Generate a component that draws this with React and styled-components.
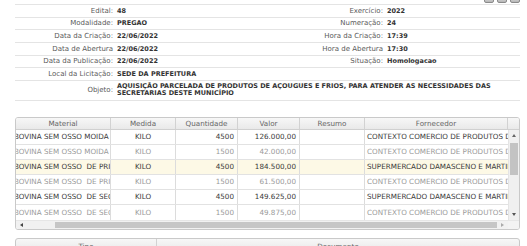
import React from 'react'
import styled, { createGlobalStyle, css } from 'styled-components'

const GlobalStyle = createGlobalStyle`
  html, body {
    margin: 0;
    padding: 0;
    background: #fff;
  }
  body {
    font-family: 'DejaVu Sans', Verdana, sans-serif;
    text-rendering: geometricPrecision;
    overflow: hidden;
  }
  * {
    box-sizing: border-box;
  }
`

const fields = [
  ['Edital:', '48', 'Exercício:', '2022'],
  ['Modalidade:', 'PREGAO', 'Numeração:', '24'],
  ['Data da Criação:', '22/06/2022', 'Hora da Criação:', '17:39'],
  ['Data de Abertura', '22/06/2022', 'Hora de Abertura', '17:30'],
  ['Data da Publicação:', '22/06/2022', 'Situação:', 'Homologacao'],
  ['Local da Licitação:', 'SEDE DA PREFEITURA', '', ''],
]

const columns = [
  { title: 'Material', width: 95 },
  { title: 'Medida', width: 65 },
  { title: 'Quantidade', width: 62 },
  { title: 'Valor', width: 62 },
  { title: 'Resumo', width: 65 },
  { title: 'Fornecedor', width: 143 },
]

const CONTEXTO = 'CONTEXTO COMERCIO DE PRODUTOS DE LIMPEZA'
const SUPER = 'SUPERMERCADO DAMASCENO E MARTINS LTDA'

const items = [
  { mat: 'BOVINA SEM OSSO MOIDA', qtd: '4500', valor: '126.000,00', forn: CONTEXTO, dim: false },
  { mat: 'BOVINA SEM OSSO MOIDA', qtd: '1500', valor: '42.000,00', forn: CONTEXTO, dim: true },
  { mat: 'BOVINA SEM OSSO  DE PRIMEIRA', qtd: '4500', valor: '184.500,00', forn: SUPER, dim: false, hl: true },
  { mat: 'BOVINA SEM OSSO  DE PRIMEIRA', qtd: '1500', valor: '61.500,00', forn: CONTEXTO, dim: true },
  { mat: 'BOVINA SEM OSSO  DE SEGUNDA', qtd: '4500', valor: '149.625,00', forn: SUPER, dim: false },
  { mat: 'BOVINA SEM OSSO  DE SEGUNDA', qtd: '1500', valor: '49.875,00', forn: CONTEXTO, dim: true },
]

function App() {
  return (
    <>
      <GlobalStyle />
      <Page>
        <Toolbar>
          <ToolIcon />
          <ToolIcon />
          <ToolIcon />
        </Toolbar>

        <Form>
          {fields.map((f) => (
            <FieldRow key={f[0]}>
              <Label>{f[0]}</Label>
              <Value>{f[1]}</Value>
              <Label>{f[2]}</Label>
              <Value>{f[3]}</Value>
            </FieldRow>
          ))}
          <FieldRow tall>
            <Label>Objeto:</Label>
            <Value wide>
              AQUISIÇÃO PARCELADA DE PRODUTOS DE AÇOUGUES E FRIOS, PARA ATENDER AS NECESSIDADES DAS
              <br />
              SECRETARIAS DESTE MUNICÍPIO
            </Value>
          </FieldRow>
        </Form>

        <Grid>
          <HeaderRow>
            {columns.map((c) => (
              <HeadCell key={c.title}>{c.title}</HeadCell>
            ))}
            <HeadCell />
          </HeaderRow>
          <Body>
            <Rows>
              {items.map((it, i) => (
                <Row key={i} dim={it.dim} hl={it.hl}>
                  <Cell>
                    <Shift>{it.mat}</Shift>
                  </Cell>
                  <Cell align='center'>KILO</Cell>
                  <Cell align='right'>{it.qtd}</Cell>
                  <Cell align='right'>{it.valor}</Cell>
                  <Cell />
                  <Cell last>{it.forn}</Cell>
                </Row>
              ))}
            </Rows>
            <VScroll>
              <ArrowBtn>
                <Arrow dir='up' />
              </ArrowBtn>
              <VTrack>
                <VThumb />
              </VTrack>
              <ArrowBtn>
                <Arrow dir='down' />
              </ArrowBtn>
            </VScroll>
          </Body>
          <HScroll>
            <HTrack>
              <HArrowBtn>
                <Arrow dir='left' />
              </HArrowBtn>
              <HGap />
              <HThumb />
              <HArrowBtn>
                <Arrow dir='right' />
              </HArrowBtn>
            </HTrack>
            <Corner />
          </HScroll>
        </Grid>

        <DocGrid>
          <HeadCell>Tipo</HeadCell>
          <HeadCell>Documento</HeadCell>
        </DocGrid>
      </Page>
    </>
  )
}

const Page = styled.div`
  width: 527px;
  padding: 0 7px 0 15px;
`

const Toolbar = styled.div`
  height: 4px;
  display: flex;
  justify-content: flex-end;
  align-items: flex-end;
  gap: 3px;
  overflow: hidden;
`

const ToolIcon = styled.span`
  width: 10px;
  height: 8px;
  border: 1px solid #8a8a8a;
  border-radius: 2px;
  background: linear-gradient(#eee, #b5b5b5);
  margin-bottom: 1px;
`

const Form = styled.div`
  border-top: 1px solid #e4e4e4;
`

const FieldRow = styled.div`
  display: grid;
  grid-template-columns: 100px 155px 115px 1fr;
  align-items: center;
  height: ${(p) => (p.tall ? '20px' : '12.66px')};
  border-bottom: 1px solid #e4e4e4;
`

const Label = styled.div`
  text-align: right;
  padding-right: 2px;
  font-size: 7px;
  color: #5a5a5a;
  white-space: nowrap;
`

const Value = styled.div`
  padding-left: 2px;
  font-size: 6.5px;
  font-weight: bold;
  color: #333;
  white-space: nowrap;
  ${(p) =>
    p.wide &&
    css`
      grid-column: 2 / 5;
      line-height: 7.6px;
    `}
`

const Grid = styled.div`
  margin-top: 16px;
  border: 1px solid #c9c9c9;
  border-radius: 3px;
  overflow: hidden;
  font-size: 7.2px;
`

const HeaderRow = styled.div`
  display: grid;
  grid-template-columns: ${columns.map((c) => c.width + 'px').join(' ')} 1fr;
  height: 12px;
  border-bottom: 1px solid #d0d0d0;
  background: linear-gradient(#f7f7f7, #e9e9e9);
`

const HeadCell = styled.div`
  display: flex;
  align-items: center;
  justify-content: center;
  border-right: 1px solid #d2d2d2;
  color: #666;
  font-size: 7.2px;
  &:last-child {
    border-right: none;
  }
`

const Body = styled.div`
  display: grid;
  grid-template-columns: 492px 1fr;
`

const Rows = styled.div``

const Row = styled.div`
  display: grid;
  grid-template-columns: ${columns.map((c) => c.width + 'px').join(' ')};
  height: 15px;
  border-bottom: 1px solid #e2e2e2;
  background: ${(p) => (p.hl ? '#fdf9e6' : '#fff')};
  color: ${(p) => (p.dim ? '#9a9a9a' : '#3a3a3a')};
  &:last-child {
    border-bottom: none;
  }
`

const Cell = styled.div`
  display: flex;
  align-items: center;
  justify-content: ${(p) =>
    p.align === 'center' ? 'center' : p.align === 'right' ? 'flex-end' : 'flex-start'};
  padding: ${(p) => (p.align === 'right' ? '0 3px 0 0' : p.align === 'center' ? '0' : '0 0 0 2px')};
  border-right: ${(p) => (p.last ? 'none' : '1px solid #dcdcdc')};
  white-space: pre;
  overflow: hidden;
  &:first-child {
    padding: 0;
  }
`

const Shift = styled.span`
  margin-left: -2px;
`

const VScroll = styled.div`
  display: flex;
  flex-direction: column;
  background: #f0f0f0;
  border-left: 1px solid #e4e4e4;
`

const ArrowBtn = styled.div`
  height: 11px;
  display: flex;
  align-items: center;
  justify-content: center;
`

const VTrack = styled.div`
  flex: 1;
  padding-top: 2px;
`

const VThumb = styled.div`
  height: 32px;
  margin: 0 1px;
  background: #c3c3c3;
`

const Arrow = styled.span`
  width: 0;
  height: 0;
  border: 2px solid transparent;
  ${(p) => p.dir === 'up' && 'border-bottom: 3px solid #666; border-top-width: 0;'}
  ${(p) => p.dir === 'down' && 'border-top: 3px solid #555; border-bottom-width: 0;'}
  ${(p) => p.dir === 'left' && 'border-right: 3px solid #444; border-left-width: 0;'}
  ${(p) => p.dir === 'right' && 'border-left: 3px solid #aaa; border-right-width: 0;'}
`

const HScroll = styled.div`
  display: grid;
  grid-template-columns: 492px 1fr;
  height: 9px;
  border-top: 1px solid #e6e6e6;
`

const HTrack = styled.div`
  display: flex;
  background: #f1f1f1;
`

const HArrowBtn = styled.div`
  width: 11px;
  display: flex;
  align-items: center;
  justify-content: center;
`

const HGap = styled.div`
  width: 28px;
`

const HThumb = styled.div`
  flex: 1;
  margin: 1px 0;
  background: #c6c6c6;
`

const Corner = styled.div`
  background: #f3f3f3;
`

const DocGrid = styled.div`
  margin-top: 8px;
  display: grid;
  grid-template-columns: 141px 1fr;
  height: 14px;
  border: 1px solid #c9c9c9;
  border-radius: 3px;
  background: linear-gradient(#f7f7f7, #e9e9e9);
  ${HeadCell} {
    padding-top: 3px;
  }
`

export default App
